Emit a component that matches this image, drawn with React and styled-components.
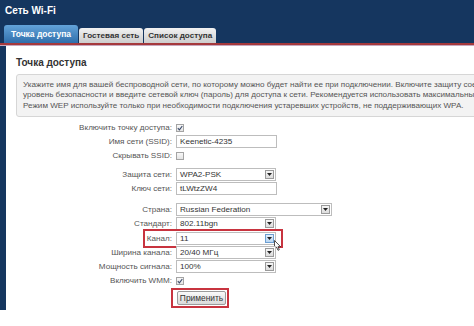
import React from 'react';
import styled, { createGlobalStyle } from 'styled-components';

const Global = createGlobalStyle`
  html, body { margin: 0; padding: 0; background: #fff; }
  body { font-family: "Liberation Sans", Arial, sans-serif; }
`;

const FS = 8.1;

const Page = styled.div`
  width: 474px;
  height: 326px;
  overflow: hidden;
  background: #fff;
`;

const Frame = styled.div`
  width: 640px;
  background: #15365f;
`;

const Header = styled.div`
  height: 43px;
  display: flex;
  flex-direction: column;
`;

const Title = styled.div`
  padding: 5px 0 0 5px;
  font-size: 10px;
  line-height: 12px;
  font-weight: bold;
  color: #fff;
`;

const Tabs = styled.div`
  margin-top: auto;
  display: flex;
  align-items: flex-end;
  gap: 1px;
  padding-left: 4px;
`;

const Tab = styled.div`
  height: ${p => (p.$active ? 18 : 15)}px;
  box-sizing: border-box;
  padding: 0 ${p => (p.$active ? 7 : 4)}px;
  display: flex;
  align-items: center;
  font-size: ${p => (p.$active ? 8.5 : 8.1)}px;
  font-weight: bold;
  border-radius: 3px 3px 0 0;
  color: ${p => (p.$active ? '#fff' : '#333')};
  background: ${p =>
    p.$active
      ? 'linear-gradient(#63a3d9, #2f6eab)'
      : 'linear-gradient(#f2f2f2, #cdcdcd)'};
`;

const RedRule = styled.div`
  height: 2px;
  background: #a5393c;
  border-bottom: 1px solid #c7a7bd;
`;

const Body = styled.div`
  padding-left: 6px;
`;

const Panel = styled.div`
  background: #fff;
  height: 264px;
  padding: 11px 0 0 10px;
  box-sizing: border-box;
`;

const Heading = styled.div`
  font-size: 10px;
  line-height: 12px;
  font-weight: bold;
  color: #333;
  margin-bottom: 5px;
`;

const InfoBox = styled.div`
  width: 640px;
  box-sizing: border-box;
  background: #f3f3f3;
  border: 1px solid #d6d6d6;
  border-radius: 3px;
  padding: 5px 6px;
  font-size: ${FS}px;
  line-height: 10.3px;
  color: #555;
  white-space: nowrap;
`;

const Form = styled.div`
  margin-top: 4px;
  display: flex;
  flex-direction: column;
`;

const Row = styled.div`
  position: relative;
  display: grid;
  grid-template-columns: 156px auto;
  column-gap: 4px;
  align-items: center;
  height: 14px;
  margin-top: ${p => p.$gap || 0}px;
`;

const Label = styled.div`
  text-align: right;
  font-size: ${FS}px;
  color: #555;
  white-space: nowrap;
`;

const Control = styled.div`
  display: flex;
  align-items: center;
`;

const Input = styled.div`
  width: ${p => p.$w || 101}px;
  height: 13px;
  box-sizing: border-box;
  border: 1px solid #bdbdbd;
  padding: 0 3px;
  font-size: ${FS}px;
  line-height: 11px;
  color: #333;
  background: #fff;
`;

const Select = styled.div`
  width: ${p => p.$w || 100}px;
  height: 13px;
  box-sizing: border-box;
  border: 1px solid #bdbdbd;
  padding: 0 1px 0 3px;
  display: flex;
  align-items: center;
  justify-content: space-between;
  font-size: ${FS}px;
  color: #333;
  background: #fff;
`;

const Arrow = styled.span`
  width: 9px;
  height: 9px;
  box-sizing: border-box;
  border: 1px solid ${p => (p.$hover ? '#6d9fd2' : '#9a9a9a')};
  background: ${p => (p.$hover ? 'linear-gradient(#e4f0fb, #b9d6f2)' : 'linear-gradient(#f6f6f6, #dcdcdc)')};
  display: flex;
  align-items: center;
  justify-content: center;
`;

const Box = styled.span`
  width: 8px;
  height: 8px;
  box-sizing: border-box;
  border: 1px solid #a4a4a4;
  background: linear-gradient(#f8f8f8, #e4e4e4);
  display: flex;
  align-items: center;
  justify-content: center;
`;

const Button = styled.div`
  margin-left: 1px;
  width: 49px;
  height: 14px;
  box-sizing: border-box;
  border: 1px solid #9b9b9b;
  border-radius: 2px;
  background: linear-gradient(#fafafa, #d9d9d9);
  font-size: 8.4px;
  color: #333;
  display: flex;
  align-items: center;
  justify-content: center;
`;

const Highlight = styled.div`
  position: absolute;
  left: ${p => p.$x}px;
  top: ${p => p.$y}px;
  width: ${p => p.$w}px;
  height: ${p => p.$h}px;
  box-sizing: border-box;
  border: 2px solid #c8343f;
  pointer-events: none;
`;

const Cursor = styled.svg`
  position: absolute;
  left: 258px;
  top: 8px;
`;

const Tri = () => (
  <svg width="5" height="3" viewBox="0 0 5 3"><path d="M0 0H5L2.5 3Z" fill="#222" /></svg>
);

const Check = ({ on }) => (
  <Box>
    {on && (
      <svg width="6" height="6" viewBox="0 0 6 6">
        <path d="M0.8 3.2L2.4 4.8L5.3 1" stroke="#3a4a6a" strokeWidth="1.1" fill="none" />
      </svg>
    )}
  </Box>
);

const Sel = ({ value, w, hover }) => (
  <Select $w={w}>
    <span>{value}</span>
    <Arrow $hover={hover}><Tri /></Arrow>
  </Select>
);

export default function App() {
  return (
    <Page>
      <Global />
      <Frame>
        <Header>
          <Title>Сеть Wi-Fi</Title>
          <Tabs>
            <Tab $active>Точка доступа</Tab>
            <Tab>Гостевая сеть</Tab>
            <Tab>Список доступа</Tab>
          </Tabs>
        </Header>
        <RedRule />
        <Body>
          <Panel>
            <Heading>Точка доступа</Heading>
            <InfoBox>
              Укажите имя для вашей беспроводной сети, по которому можно будет найти ее при подключении. Включите защиту соединения, выберите<br />
              уровень безопасности и введите сетевой ключ (пароль) для доступа к сети. Рекомендуется использовать максимальный уровень защиты.<br />
              Режим WEP используйте только при необходимости подключения устаревших устройств, не поддерживающих WPA.
            </InfoBox>
            <Form>
              <Row>
                <Label>Включить точку доступа:</Label>
                <Control><Check on /></Control>
              </Row>
              <Row>
                <Label>Имя сети (SSID):</Label>
                <Control><Input>Keenetic-4235</Input></Control>
              </Row>
              <Row>
                <Label>Скрывать SSID:</Label>
                <Control><Check /></Control>
              </Row>
              <Row $gap={5}>
                <Label>Защита сети:</Label>
                <Control><Sel value="WPA2-PSK" /></Control>
              </Row>
              <Row>
                <Label>Ключ сети:</Label>
                <Control><Input>tLWtzZW4</Input></Control>
              </Row>
              <Row $gap={7}>
                <Label>Страна:</Label>
                <Control><Sel value="Russian Federation" w={156} /></Control>
              </Row>
              <Row>
                <Label>Стандарт:</Label>
                <Control><Sel value="802.11bgn" /></Control>
              </Row>
              <Row $gap={1}>
                <Label>Канал:</Label>
                <Control><Sel value="11" hover /></Control>
                <Highlight $x={127} $y={-3} $w={140} $h={19} />
                <Cursor width="7" height="11" viewBox="0 0 7 11">
                  <path d="M0.5 0.5V9L2.6 7.2L4 10.3L5.3 9.7L4 6.7H6.6Z" fill="#fff" stroke="#222" strokeWidth="0.8" />
                </Cursor>
              </Row>
              <Row>
                <Label>Ширина канала:</Label>
                <Control><Sel value="20/40 МГц" /></Control>
              </Row>
              <Row>
                <Label>Мощность сигнала:</Label>
                <Control><Sel value="100%" /></Control>
              </Row>
              <Row>
                <Label>Включить WMM:</Label>
                <Control><Check on /></Control>
              </Row>
              <Row $gap={3}>
                <span />
                <Control><Button>Применить</Button></Control>
                <Highlight $x={155} $y={-3} $w={58} $h={20} />
              </Row>
            </Form>
          </Panel>
        </Body>
      </Frame>
    </Page>
  );
}
